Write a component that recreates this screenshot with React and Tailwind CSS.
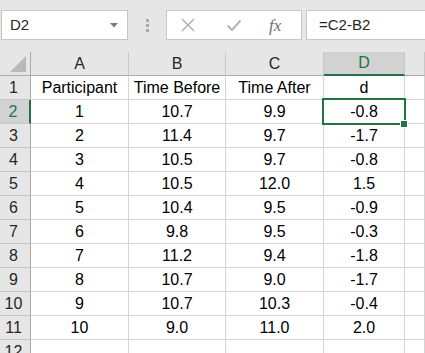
import React from "react";

const rows = [
  ["1", "10.7", "9.9", "-0.8"],
  ["2", "11.4", "9.7", "-1.7"],
  ["3", "10.5", "9.7", "-0.8"],
  ["4", "10.5", "12.0", "1.5"],
  ["5", "10.4", "9.5", "-0.9"],
  ["6", "9.8", "9.5", "-0.3"],
  ["7", "11.2", "9.4", "-1.8"],
  ["8", "10.7", "9.0", "-1.7"],
  ["9", "10.7", "10.3", "-0.4"],
  ["10", "9.0", "11.0", "2.0"],
];

const cellFont = { fontFamily: '"Liberation Sans", Arial, sans-serif' };

function ColHeader({ label, selected }) {
  return (
    <div
      className={
        "flex items-center justify-center h-[24px] text-[16px] border-r border-r-[#c8c8c8] " +
        (selected
          ? "bg-[#d2d2d2] text-[#217346] border-b-2 border-b-[#217346]"
          : "bg-[#e6e6e6] text-[#262626] border-b border-b-[#ababab]")
      }
    >
      {label}
    </div>
  );
}

function RowHeader({ label, selected }) {
  return (
    <div
      className={
        "flex items-center justify-center pr-[3px] h-[24px] text-[16px] border-b border-b-[#c8c8c8] " +
        (selected
          ? "bg-[#d2d2d2] text-[#217346] border-r-2 border-r-[#217346]"
          : "bg-[#e6e6e6] text-[#262626] border-r border-r-[#ababab]")
      }
    >
      {label}
    </div>
  );
}

function Cell({ children, selected }) {
  return (
    <div className="relative flex items-center justify-center h-[24px] text-[16px] text-black bg-white border-r border-b border-[#d4d4d4]">
      {children}
      {selected && (
        <>
          <div className="absolute z-10 left-[-2px] top-[-2px] w-[84px] h-[27px] border-2 border-[#217346] pointer-events-none" />
          <div className="absolute z-20 left-[77px] top-[21px] w-[6px] h-[6px] bg-[#217346] outline outline-1 outline-white" />
        </>
      )}
    </div>
  );
}

export default function App() {
  return (
    <div className="w-[425px] h-[353px] overflow-hidden bg-white" style={cellFont}>
      {/* formula bar */}
      <div className="h-[52px] bg-[#e6e6e6] flex items-start pt-[10px]">
        <div className="ml-[1px] w-[127px] h-[30px] bg-white border border-[#c6c6c6] flex items-center pl-[8px] pr-[9px] text-[15px] text-[#262626]">
          <span className="flex-1">D2</span>
          <svg width="8" height="5" viewBox="0 0 8 5">
            <polygon points="0,0 8,0 4,4.5" fill="#7a7a7a" />
          </svg>
        </div>
        <div className="w-[38px] h-[30px] flex flex-col items-center justify-center gap-[2px] pl-[1px]">
          <div className="w-[3px] h-[3px] bg-[#a9a9a9]" />
          <div className="w-[3px] h-[3px] bg-[#a9a9a9]" />
          <div className="w-[3px] h-[3px] bg-[#a9a9a9]" />
        </div>
        <div className="w-[136px] h-[30px] bg-white border border-[#c6c6c6] flex items-center">
          <svg className="ml-[13px]" width="16" height="16" viewBox="0 0 16 16">
            <path d="M2 2 L14 14 M14 2 L2 14" stroke="#b4b4b4" strokeWidth="1.6" fill="none" />
          </svg>
          <svg className="ml-[30px]" width="16" height="16" viewBox="0 0 16 16">
            <path d="M1.5 8.5 L6 13 L14.5 3.5" stroke="#b4b4b4" strokeWidth="2" fill="none" />
          </svg>
          <span
            className="ml-[27px] text-[17px] italic text-[#6e6e6e] leading-none"
            style={{ fontFamily: '"Liberation Serif", "Times New Roman", serif' }}
          >
            fx
          </span>
        </div>
        <div className="ml-[4px] flex-1 h-[30px] bg-white border border-r-0 border-[#c6c6c6] flex items-center pl-[12px] text-[15px] text-[#262626]">
          =C2-B2
        </div>
      </div>

      {/* grid */}
      <div className="grid grid-cols-[31px_98px_97px_98px_81px_1fr]">
        {/* corner */}
        <div className="relative h-[24px] bg-[#e6e6e6] border-r border-b border-r-[#ababab] border-b-[#ababab]">
          <svg className="absolute right-[4px] bottom-[3px]" width="16" height="16" viewBox="0 0 16 16">
            <polygon points="16,0 16,16 0,16" fill="#b8b8b8" />
          </svg>
        </div>
        <ColHeader label="A" />
        <ColHeader label="B" />
        <ColHeader label="C" />
        <ColHeader label="D" selected />
        <ColHeader label="" />

        {/* row 1 */}
        <RowHeader label="1" />
        <Cell>Participant</Cell>
        <Cell>Time Before</Cell>
        <Cell>Time After</Cell>
        <Cell>d</Cell>
        <Cell />

        {rows.map((r, i) => (
          <React.Fragment key={i}>
            <RowHeader label={String(i + 2)} selected={i === 0} />
            <Cell>{r[0]}</Cell>
            <Cell>{r[1]}</Cell>
            <Cell>{r[2]}</Cell>
            <Cell selected={i === 0}>{r[3]}</Cell>
            <Cell />
          </React.Fragment>
        ))}

        <RowHeader label="12" />
        <Cell />
        <Cell />
        <Cell />
        <Cell />
        <Cell />
      </div>
    </div>
  );
}
